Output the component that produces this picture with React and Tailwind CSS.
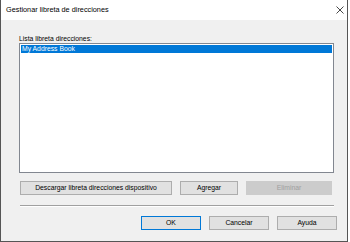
import React from "react";

const FONT = { fontFamily: '"Liberation Sans", Arial, sans-serif' };

const Btn = ({ children, className = "", disabled = false, primary = false }) => (
  <button
    disabled={disabled}
    className={`h-[14px] flex items-center justify-center text-[6.8px] leading-none ${
      disabled
        ? "bg-[#cccccc] border border-[#cccccc] text-[#a0a0a0]"
        : primary
        ? "bg-[#e1e1e1] border border-[#0078d7] text-black"
        : "bg-[#e1e1e1] border border-[#adadad] text-black"
    } ${className}`}
  >
    {children}
  </button>
);

export default function App() {
  return (
    <div className="w-[350px] h-[242px] bg-white" style={FONT}>
      <div className="w-[348px] h-[242px] flex flex-col border-x border-b border-[#555555]">
        {/* Title bar */}
        <div className="h-[20px] bg-white flex items-center justify-between pl-[5px] pr-[3px]">
          <span className="text-[7.3px] text-black">Gestionar libreta de direcciones</span>
          <svg width="8" height="8" viewBox="0 0 8 8" className="mr-[0px]">
            <path d="M0.5 0.5L7.5 7.5M7.5 0.5L0.5 7.5" stroke="#333" strokeWidth="0.9" fill="none" />
          </svg>
        </div>

        {/* Body */}
        <div className="flex-1 bg-[#f0f0f0] flex flex-col pl-[18px] pr-[10px] pt-[15px]">
          <div className="h-[8px] text-[6.8px] leading-[8px] text-black">Lista libreta direcciones:</div>
          <div className="w-[315px] h-[130px] bg-white border border-[#828790] p-[1px]">
            <div className="h-[8px] bg-[#0078d7] text-white text-[6.8px] leading-[8px] pl-[1px]">
              My Address Book
            </div>
          </div>

          <div className="flex gap-[8px] mt-[8px] pl-[1px]">
            <Btn className="w-[152px]">Descargar libreta direcciones dispositivo</Btn>
            <Btn className="w-[58px]">Agregar</Btn>
            <Btn className="w-[86px]" disabled>
              Eliminar
            </Btn>
          </div>

          <div className="mt-[10px] w-[314px] ml-[1px] h-[2px] flex flex-col">
            <div className="h-[1px] bg-[#a0a0a0]" />
            <div className="h-[1px] bg-white" />
          </div>

          <div className="flex justify-end gap-[8px] mt-[9px]">
            <Btn className="w-[60px]" primary>
              OK
            </Btn>
            <Btn className="w-[60px]">Cancelar</Btn>
            <Btn className="w-[60px]">Ayuda</Btn>
          </div>
        </div>
      </div>
    </div>
  );
}
